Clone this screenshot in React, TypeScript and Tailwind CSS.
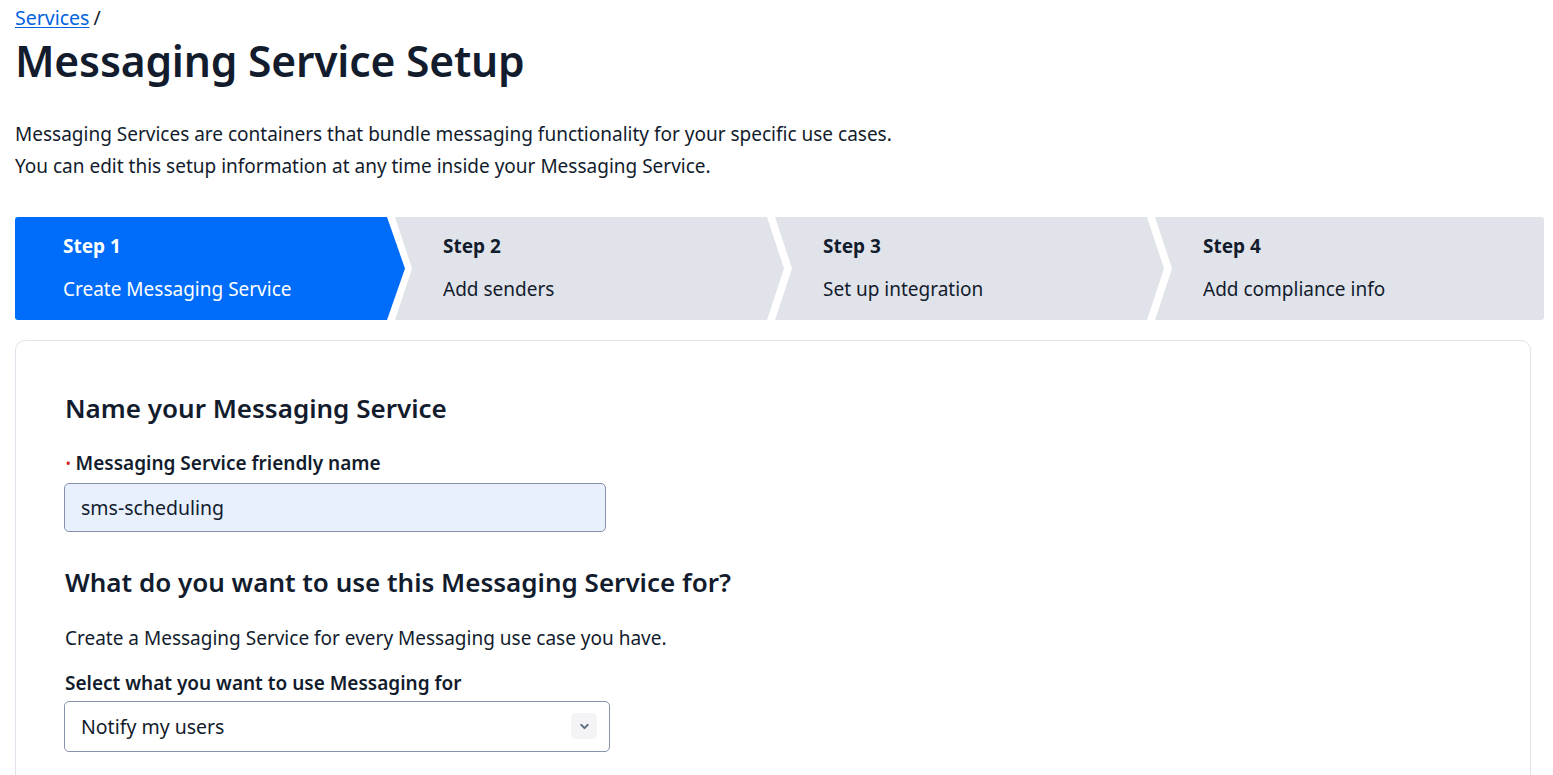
import React from "react";

const font = { fontFamily: '"Noto Sans", "Open Sans", Arial, sans-serif' };

interface StepProps {
  num: number;
  label: string;
  active?: boolean;
  className: string;
  shape: string;
}

const Step: React.FC<StepProps> = ({ num, label, active, className, shape }) => {
  return (
    <div
      className={`${className} ${shape} shrink-0 h-[103px] flex flex-col justify-center pl-12 pb-[2px] ${
        active ? "bg-[#006dfa] text-white" : "bg-[#e1e3ea] text-[#121c2d]"
      }`}
    >
      <div className="text-[19px] font-bold leading-6">Step {num}</div>
      <div className="text-[19px] leading-6 mt-[19px]">{label}</div>
    </div>
  );
};

const ChevronDown = () => (
  <svg width="13" height="13" viewBox="0 0 20 20" fill="none">
    <path d="M5 7.5l5 5 5-5" stroke="#606b85" strokeWidth="3.2" strokeLinecap="round" strokeLinejoin="round" />
  </svg>
);

export default function App() {
  return (
    <div className="min-h-screen bg-white text-[#121c2d] px-[15px] overflow-hidden" style={font}>
      <div className="pt-[4px] text-[19.5px] leading-[28px]">
        <a href="#" className="text-[#0263e0] underline underline-offset-2">
          Services
        </a>
        <span className="ml-1">/</span>
      </div>
      <h1 className="mt-[2px] text-[42.6px] font-semibold leading-[52px] tracking-[-0.2px]">
        Messaging Service Setup
      </h1>
      <div className="mt-[32px] text-[19px] leading-8 text-[#121c2d]">
        <p>Messaging Services are containers that bundle messaging functionality for your specific use cases.</p>
        <p>You can edit this setup information at any time inside your Messaging Service.</p>
      </div>

      <div className="mt-[35px] flex">
        <Step
          num={1}
          label="Create Messaging Service"
          active
          className="w-[390px] rounded-l-[3px]"
          shape="[clip-path:polygon(0_0,calc(100%-18px)_0,100%_50%,calc(100%-18px)_100%,0_100%)]"
        />
        <Step
          num={2}
          label="Add senders"
          className="w-[389px] ml-[-10px]"
          shape="[clip-path:polygon(0_0,calc(100%-17px)_0,100%_50%,calc(100%-17px)_100%,0_100%,17px_50%)]"
        />
        <Step
          num={3}
          label="Set up integration"
          className="w-[389px] ml-[-9px]"
          shape="[clip-path:polygon(0_0,calc(100%-17px)_0,100%_50%,calc(100%-17px)_100%,0_100%,17px_50%)]"
        />
        <Step
          num={4}
          label="Add compliance info"
          className="w-[389px] ml-[-9px] rounded-r-[3px]"
          shape="[clip-path:polygon(0_0,100%_0,100%_100%,0_100%,17px_50%)]"
        />
      </div>

      <div className="mt-[20px] w-[1516px] border border-[#e1e3ea] rounded-[10px] px-[48px] pt-[49px] pb-16">
        <h2 className="ml-px text-[26px] font-semibold leading-9">Name your Messaging Service</h2>
        <label className="block mt-[25px] ml-[2px] text-[19px] font-semibold leading-6">
          <span className="text-[#d61f1f] text-[12px] align-middle mr-[5px] relative top-[-1px]">•</span>
          Messaging Service friendly name
        </label>
        <div className="mt-[6px] w-[542px] h-[49px] rounded-[5px] border border-[#8891aa] bg-[#e8f0fe] flex items-center px-4 text-[19.5px]">
          sms-scheduling
        </div>

        <h2 className="mt-[32px] ml-px text-[26px] font-semibold leading-9">
          What do you want to use this Messaging Service for?
        </h2>
        <p className="mt-[24px] ml-px text-[19px] leading-7">
          Create a Messaging Service for every Messaging use case you have.
        </p>
        <label className="block mt-[19px] ml-px text-[19px] font-semibold leading-6">
          Select what you want to use Messaging for
        </label>
        <div className="mt-[6px] w-[546px] h-[51px] rounded-[5px] border border-[#8891aa] bg-white flex items-center justify-between pl-4 pr-[12px] text-[19.5px]">
          <span>Notify my users</span>
          <span className="w-[26px] h-[26px] rounded-[5px] bg-[#f4f4f6] flex items-center justify-center">
            <ChevronDown />
          </span>
        </div>
      </div>
    </div>
  );
}
